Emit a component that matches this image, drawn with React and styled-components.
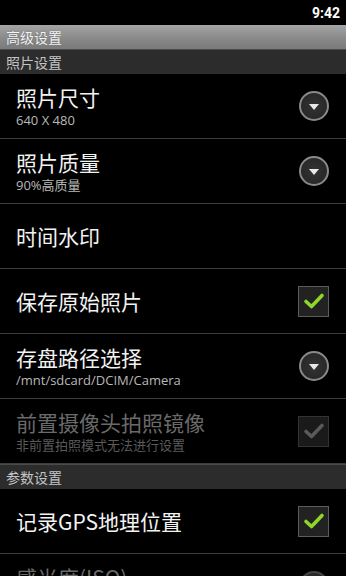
import React from "react";
import styled, { createGlobalStyle } from "styled-components";

const GlobalStyle = createGlobalStyle`
  html, body {
    margin: 0;
    padding: 0;
    background: #000;
    overflow: hidden;
  }
  body {
    font-family: "Noto Sans CJK SC", "Noto Sans", sans-serif;
  }
`;

const Screen = styled.div`
  width: 346px;
  height: 576px;
  background: #000;
  overflow: hidden;
`;

const StatusBar = styled.div`
  height: 25px;
  display: flex;
  align-items: center;
  justify-content: flex-end;
  padding-right: 6px;
  color: #fff;
  font-family: "Roboto", "Liberation Sans", sans-serif;
  font-weight: 700;
  font-size: 14px;
`;

const TitleBar = styled.div`
  height: 24px;
  display: flex;
  align-items: center;
  padding-left: 6px;
  background: linear-gradient(#a4a4a4, #8c8c8c 50%, #7a7a7a);
  color: #f4f4f4;
  font-size: 14px;
  line-height: 18px;
  text-shadow: 0 0 1px #555;
`;

const Category = styled.div`
  height: 24px;
  display: flex;
  align-items: center;
  padding-left: 6px;
  background: #2c2c2c;
  border-top: 1px solid #4a4a4a;
  color: #c4c4c4;
  font-size: 14px;
  line-height: 18px;
`;

const Row = styled.div`
  height: 64px;
  display: flex;
  align-items: center;
  justify-content: space-between;
  padding: 0 17px 0 16px;
  border-bottom: 1px solid #3c3c3c;
`;

const Texts = styled.div`
  display: flex;
  flex-direction: column;
  gap: 2px;
`;

const Title = styled.div`
  font-size: 21px;
  line-height: 26px;
  white-space: nowrap;
  color: ${(p) => (p.$disabled ? "#6a6a6a" : "#f2f2f2")};
`;

const Summary = styled.div`
  font-size: 13px;
  line-height: 16px;
  white-space: nowrap;
  color: ${(p) => (p.$disabled ? "#5a5a5a" : "#b8b8b8")};
  font-family: "Open Sans", "Noto Sans CJK SC", sans-serif;
`;

const Spinner = styled.div`
  width: 26px;
  height: 26px;
  flex-shrink: 0;
  border-radius: 50%;
  border: 2px solid ${(p) => (p.$disabled ? "#444" : "#8a8a8a")};
  background: radial-gradient(#333, #242424);
  display: flex;
  align-items: center;
  justify-content: center;
  &::after {
    content: "";
    border-left: 5px solid transparent;
    border-right: 5px solid transparent;
    border-top: 6px solid ${(p) => (p.$disabled ? "#555" : "#e8e8e8")};
    margin-top: 2px;
  }
`;

const Check = styled.div`
  width: 29px;
  height: 29px;
  flex-shrink: 0;
  border: 1px solid ${(p) => (p.$disabled ? "#333" : "#5c5c5c")};
  background: ${(p) => (p.$disabled ? "#1a1a1a" : "#222")};
  display: flex;
  align-items: center;
  justify-content: center;
  svg {
    display: block;
  }
`;

function CheckBox({ disabled }) {
  return (
    <Check $disabled={disabled}>
      <svg width="22" height="18" viewBox="0 0 22 18">
        <path
          d="M3 9.5 L8.5 14.5 L19 3.5"
          fill="none"
          stroke={disabled ? "#5a5a5a" : "#8ed62a"}
          strokeWidth="3.6"
          strokeLinecap="round"
          strokeLinejoin="round"
        />
      </svg>
    </Check>
  );
}

function Pref({ title, summary, widget, disabled }) {
  return (
    <Row>
      <Texts>
        <Title $disabled={disabled}>{title}</Title>
        {summary && <Summary $disabled={disabled}>{summary}</Summary>}
      </Texts>
      {widget === "list" && <Spinner $disabled={disabled} />}
      {widget === "check" && <CheckBox disabled={disabled} />}
    </Row>
  );
}

export default function App() {
  return (
    <Screen>
      <GlobalStyle />
      <StatusBar>9:42</StatusBar>
      <TitleBar>高级设置</TitleBar>
      <Category>照片设置</Category>
      <Pref title="照片尺寸" summary="640 X 480" widget="list" />
      <Pref title="照片质量" summary="90%高质量" widget="list" />
      <Pref title="时间水印" />
      <Pref title="保存原始照片" widget="check" />
      <Pref title="存盘路径选择" summary="/mnt/sdcard/DCIM/Camera" widget="list" />
      <Pref
        title="前置摄像头拍照镜像"
        summary="非前置拍照模式无法进行设置"
        widget="check"
        disabled
      />
      <Category>参数设置</Category>
      <Pref title="记录GPS地理位置" widget="check" />
      <Pref title="感光度(ISO)" summary="自动" widget="list" disabled />
    </Screen>
  );
}
